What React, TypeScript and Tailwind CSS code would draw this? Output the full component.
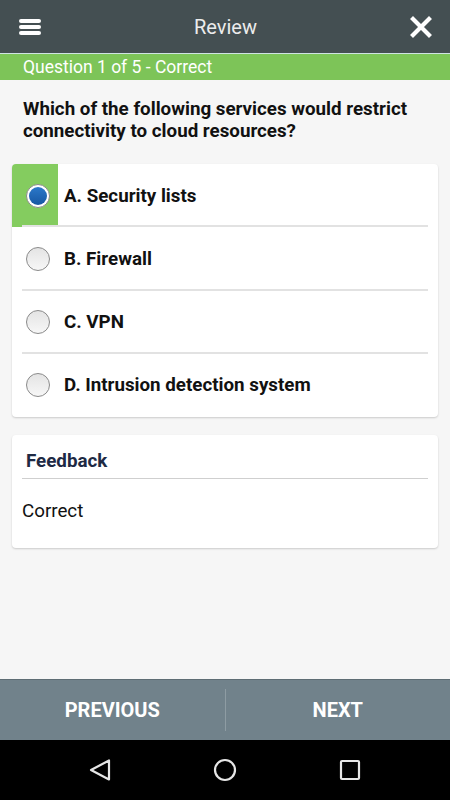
import { useState } from "react";

const OPTIONS = [
  "A. Security lists",
  "B. Firewall",
  "C. VPN",
  "D. Intrusion detection system",
];

function Radio({ on }: { on: boolean }) {
  return (
    <span
      className={`flex h-[24px] w-[24px] items-center justify-center rounded-full border border-[#8a8a8a] ${
        on ? "bg-white" : "bg-gradient-to-b from-[#e4e4e4] to-[#f7f7f7]"
      }`}
    >
      {on && <span className="h-[18px] w-[18px] rounded-full bg-gradient-to-b from-[#2b78c9] to-[#1757a3]" />}
    </span>
  );
}

export default function App() {
  const [picked] = useState(0);
  return (
    <div className="flex h-[800px] w-[450px] flex-col bg-[#f6f6f6] font-['Roboto','Liberation_Sans',sans-serif]">
      <header className="flex h-[54px] shrink-0 items-center justify-between border-b border-[#cfe3e3] bg-[#444f52] px-[19px]">
        <div className="flex w-[22px] flex-col gap-[2px]">
          <span className="h-[4px] rounded-full bg-white" />
          <span className="h-[4px] rounded-full bg-white" />
          <span className="h-[4px] rounded-full bg-white" />
        </div>
        <h1 className="text-[20px] text-[#ececec]">Review</h1>
        <svg width="22" height="22" viewBox="0 0 22 22" className="mr-[-1px]">
          <path d="M3 3L19 19M19 3L3 19" stroke="white" strokeWidth="4.2" strokeLinecap="square" />
        </svg>
      </header>

      <div className="flex h-[26px] shrink-0 items-center bg-[#7dc458] px-[23px] text-[17.5px] text-white">
        Question 1 of 5 - Correct
      </div>

      <main className="flex flex-1 flex-col px-[12px]">
        <p className="px-[11px] pt-[17.5px] text-[18.75px] font-bold leading-[22px] text-[#111]">
          Which of the following services would restrict connectivity to cloud resources?
        </p>

        <ul className="mt-[22.5px] rounded-[4px] bg-white shadow-[0_1px_2px_rgba(0,0,0,0.18)]">
          {OPTIONS.map((o, i) => (
            <li key={o} className="relative flex h-[63.25px] items-center">
              <div
                className={`flex h-full w-[46px] items-center pl-[13.5px] ${
                  i === picked ? "rounded-tl-[4px] bg-[#84cc5f]" : ""
                }`}
              >
                <Radio on={i === picked} />
              </div>
              <span className="ml-[6px] text-[18.75px] font-bold text-[#111]">{o}</span>
              {i < OPTIONS.length - 1 && (
                <span className="absolute bottom-0 left-[10px] right-[10px] h-[2px] bg-[#e2e2e2]" />
              )}
            </li>
          ))}
        </ul>

        <section className="mt-[18px] rounded-[4px] bg-white px-[10px] pb-[26px] shadow-[0_1px_2px_rgba(0,0,0,0.18)]">
          <h2 className="border-b border-[#cfcfcf] px-[4px] pb-[6px] pt-[15px] text-[18.75px] font-bold leading-[22px] text-[#1e2a44]">
            Feedback
          </h2>
          <p className="pt-[21px] text-[18.75px] leading-[22px] text-[#111]">Correct</p>
        </section>
      </main>

      <nav className="flex h-[61px] shrink-0 items-center border-t border-[#5e6d74] bg-[#71828b] text-[20px] font-bold text-white">
        <button className="flex-1 text-center">PREVIOUS</button>
        <span className="h-[42px] w-[1px] bg-[#8e9ca3]" />
        <button className="flex-1 text-center">NEXT</button>
      </nav>

      <div className="flex h-[60px] shrink-0 items-center justify-center gap-[101px] bg-black">
        <svg width="24" height="24" viewBox="0 0 24 24">
          <path d="M21 2.5L21 21.5L3 12Z" fill="none" stroke="#e6e6e6" strokeWidth="2.2" strokeLinejoin="round" />
        </svg>
        <svg width="24" height="24" viewBox="0 0 24 24">
          <circle cx="12" cy="12" r="10" fill="none" stroke="#e6e6e6" strokeWidth="2.2" />
        </svg>
        <svg width="24" height="24" viewBox="0 0 24 24">
          <rect x="3" y="3" width="18" height="18" rx="1" fill="none" stroke="#e6e6e6" strokeWidth="2.2" />
        </svg>
      </div>
    </div>
  );
}
